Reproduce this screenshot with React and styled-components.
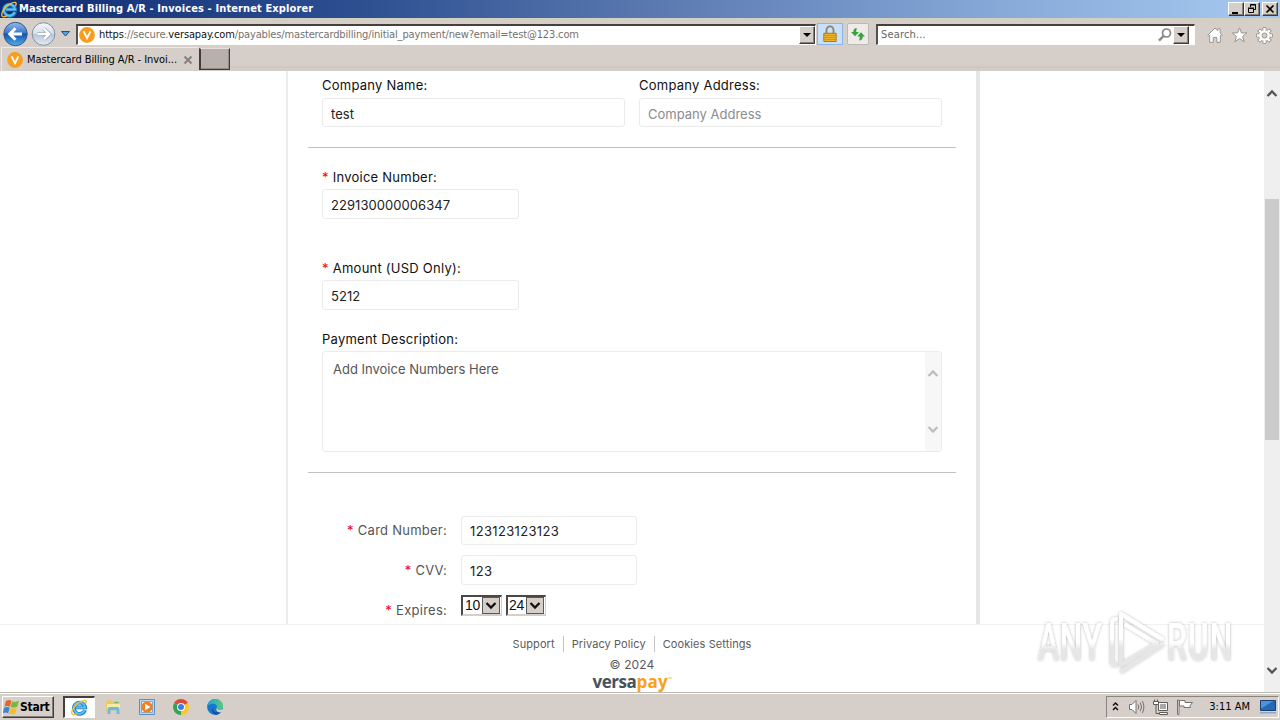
import React from 'react'
import styled, { createGlobalStyle, css } from 'styled-components'

const GlobalStyle = createGlobalStyle`
  * {
    box-sizing: border-box;
  }

  body {
    margin: 0;
    background: #fff;
    overflow: hidden;
  }
`

const colors = {
  chrome: '#d6cec8',
  url: '#75716e',
  label: '#111',
  muted: '#555',
  required: '#f00010',
  orange: '#f9a11b',
}

const systemFont = `'DejaVu Sans Condensed', 'DejaVu Sans', sans-serif`

const Screen = styled.div`
  width: 1280px;
  height: 720px;
  display: flex;
  flex-direction: column;
  overflow: hidden;
  background: #fff;

  svg {
    display: block;
    flex: none;
  }
`

/* window chrome */

const TitleBar = styled.header`
  height: 18px;
  padding: 0 2px 0 1px;
  display: flex;
  align-items: center;
  gap: 1px;
  background: linear-gradient(to right, #102c74, #2d4f90 28%, #5c7bb2 52%, #86a9d8 78%, #a6caf0);
`

const WindowTitle = styled.h1`
  flex: 1;
  margin: 0;
  color: #fff;
  font: bold 11px/18px ${systemFont};
  letter-spacing: 0.12px;
  white-space: nowrap;
`

const WindowButtons = styled.div`
  display: flex;
`

const raised = css`
  border: 1px solid;
  border-color: #fff #403c3a #403c3a #fff;
  box-shadow: inset -1px -1px 0 #857f7a;
`

const WindowButton = styled.button`
  width: 16px;
  height: 14px;
  margin: 0 0 0 ${props => props.$gap || '0'};
  padding: 0;
  background: ${colors.chrome};
  ${raised}
`

const NavBar = styled.nav`
  height: 29px;
  padding: 0 7px 0 3px;
  display: flex;
  align-items: center;
  border-top: 3px solid #d3cfc2;
  background: ${colors.chrome};
`

const HistoryButtons = styled.div`
  width: 73px;
  height: 26px;
  display: flex;
  align-items: center;
`

const Field = styled.div`
  height: 21px;
  display: flex;
  align-items: center;
  border: solid;
  border-width: 2px 1px 1px 2px;
  border-color: #45403e #fff #fff #55504d;
  background: #fff;
`

const AddressField = styled(Field)`
  width: 740px;
  padding-left: 1px;
`

const SearchField = styled(Field)`
  width: 319px;
  margin-left: 7px;
`

const Url = styled.span`
  flex: 1;
  padding-left: ${props => props.$search ? '3px' : '4px'};
  color: ${props => props.$search ? '#666' : colors.url};
  font: 11px/18px ${systemFont};
  letter-spacing: ${props => props.$search ? '0.17px' : '-0.145px'};
  white-space: nowrap;

  b {
    color: #111;
    font-weight: normal;
  }
`

const DropButton = styled.button`
  width: 16px;
  height: 18px;
  margin-right: ${props => props.$right || '0'};
  padding: 0;
  background: ${colors.chrome};
  ${raised}
`

const ToolButton = styled.button`
  width: ${props => props.$active ? '26px' : '22px'};
  height: 22px;
  margin-left: ${props => props.$active ? '1px' : '4px'};
  padding: 0;
  display: flex;
  align-items: center;
  justify-content: center;
  border: 1px solid ${props => props.$active ? '#8fb4e3' : '#bcb8b5'};
  border-radius: ${props => props.$active ? '0' : '2px'};
  background: ${props => props.$active ? '#c9e0fb' : '#eeebe9'};
`

const Tools = styled.div`
  margin-left: auto;
  padding-top: 2px;
  display: flex;
  gap: 8px;
`

const TabBar = styled.div`
  height: 24px;
  padding-left: 1px;
  display: flex;
  align-items: flex-start;
  background: linear-gradient(#d6cec8 19px, #c6c3c0 20px, #d4ccc7 21px);
`

const Tab = styled.div`
  width: 197px;
  height: 24px;
  padding: 1px 5px 0 5px;
  display: flex;
  align-items: center;
  border-left: 1px solid #eeeae7;
  border-top: 1px solid #eeeae7;
  background: ${colors.chrome};
`

const TabTitle = styled.span`
  flex: 1;
  padding-left: 4px;
  color: #000;
  font: 11px/18px ${systemFont};
  letter-spacing: -0.06px;
  white-space: nowrap;
`

const NewTab = styled.div`
  width: 31px;
  height: 22px;
  margin: 1px 0 0 1px;
  border: 1px solid #403c3a;
  border-left-width: 2px;
  border-top-color: #e3dfdc;
  box-shadow: inset -1px -1px 0 #918a86;
  background: #b8b0ab;
`

/* page */

const Viewport = styled.div`
  height: 621px;
  display: flex;
`

const Page = styled.main`
  width: 1264px;
  display: flex;
  flex-direction: column;
  align-items: center;
  font-family: Inter, 'Liberation Sans', sans-serif;
  font-size: 13px;
`

const PanelClip = styled.div`
  width: 1264px;
  height: 553px;
  padding-left: 286px;
  overflow: hidden;
`

const Panel = styled.form`
  width: 694px;
  height: 600px;
  padding: 4px 20px 0;
  border-left: 2px solid #ececec;
  border-right: 4px solid #e6e6e6;
`

const Section = styled.section`
  padding: 0 14px;
`

const Columns = styled.div`
  display: flex;
  gap: 14px;
`

const FormGroup = styled.div`
  margin-top: ${props => props.$top || '0'};
`

const Label = styled.label`
  height: ${props => props.$height || '22px'};
  display: block;
  color: ${colors.label};
  letter-spacing: 0.24px;
  line-height: 21px;
  white-space: nowrap;
`

const Required = styled.span`
  margin-right: 4px;
  color: ${colors.required};
`

const Input = styled.input`
  width: ${props => props.$width};
  height: ${props => props.$height || '30px'};
  padding: ${props => props.$raised ? '0 8px' : '2px 8px 0'};
  display: block;
  border: 1px solid #ebebeb;
  border-radius: 3px;
  outline: none;
  background: #fff;
  color: #222;
  font: inherit;
  letter-spacing: ${props => props.$spacing || '0.06px'};

  &::placeholder {
    color: #8c8c8c;
    opacity: 1;
    letter-spacing: 0;
  }
`

const TextBox = styled.div`
  height: 101px;
  display: flex;
  justify-content: space-between;
  border: 1px solid #ebebeb;
  border-radius: 3px;
  overflow: hidden;
`

const TextBoxText = styled.div`
  padding: 8px 10px;
  color: #555;
  line-height: 18px;
`

const TextBoxScroll = styled.div`
  width: 16px;
  padding: 17px 1px 17px 2px;
  display: flex;
  flex-direction: column;
  justify-content: space-between;
  background: #f7f7f7;
`

const Divider = styled.hr`
  height: 1px;
  margin: 20px 0 0;
  border: 0;
  background: #c2c2c2;
`

const CardForm = styled.section`
  padding-top: 43px;
  display: flex;
  flex-direction: column;
  gap: 10px;
`

const CardRow = styled.div`
  display: grid;
  grid-template-columns: 139px auto;
  column-gap: 14px;
  align-items: start;
`

const CardLabel = styled.label`
  color: ${colors.muted};
  letter-spacing: 0.25px;
  line-height: ${props => props.$line || '29px'};
  text-align: right;
`

const Selects = styled.div`
  display: flex;
  gap: 4px;
`

const SelectBox = styled.div`
  width: 41px;
  height: 21px;
  padding-left: 2px;
  display: flex;
  justify-content: space-between;
  border: solid;
  border-width: 2px 1px 2px 2px;
  border-color: #4b4745 #d6cec8 #d6cec8 #4b4745;
  background: #fff;
  color: #111;
  font: 14px/17px 'Liberation Sans', Arial, sans-serif;
  letter-spacing: -0.4px;

  & + & {
    width: 40px;
    padding-left: 1px;
  }
`

const SelectArrow = styled.span`
  width: 18px;
  height: 17px;
  margin-right: 1px;
  display: flex;
  align-items: center;
  justify-content: center;
  border: 1px solid #5c5855;
  background: ${colors.chrome};
`

const Footer = styled.footer`
  width: 1264px;
  flex: 1;
  padding-top: 11px;
  display: flex;
  flex-direction: column;
  align-items: center;
  border-top: 1px solid #f1f1f1;
  color: #5b5b5b;
`

const FooterLinks = styled.div`
  display: flex;
  font-size: 11px;
  letter-spacing: 0.09px;
  line-height: 16px;
`

const FooterLink = styled.a`
  padding: 0 8px;

  & + & {
    border-left: 1px solid #c4c4c4;
  }
`

const Copyright = styled.div`
  margin-top: 5px;
  font-size: 12px;
  letter-spacing: 0.15px;
  line-height: 15px;
`

const Wordmark = styled.div`
  height: 18px;
  margin-top: 1px;
  display: flex;
  color: #48525b;
  font: bold 17px/17px 'Open Sans', sans-serif;
  letter-spacing: -0.45px;

  span {
    color: ${colors.orange};
    letter-spacing: 0.3px;
  }

  sup {
    margin-top: 4px;
    color: ${colors.orange};
    font-size: 5px;
    line-height: 5px;
  }
`

const ScrollBar = styled.div`
  width: 16px;
  padding: 18px 1px 17px 1px;
  display: flex;
  flex-direction: column;
  align-items: center;
  background: #efefef;
`

const ScrollThumb = styled.div`
  width: 14px;
  height: 241px;
  margin: 101px 0 auto;
  background: #cbcbcb;
`

const Watermark = styled.div`
  position: absolute;
  left: 1030px;
  top: 602px;
`

/* taskbar */

const TaskBar = styled.div`
  height: 28px;
  padding: 3px 1px 2px 2px;
  display: flex;
  align-items: center;
  border-top: 1px solid #bdbab3;
  box-shadow: inset 0 1px 0 #fff;
  background: ${colors.chrome};
`

const StartButton = styled.button`
  width: 52px;
  height: 22px;
  padding: 0;
  display: flex;
  align-items: center;
  background: ${colors.chrome};
  color: #000;
  font: bold 12px/18px ${systemFont};
  letter-spacing: -0.25px;
  ${raised}
`

const ActiveTask = styled.div`
  width: 32px;
  height: 22px;
  margin: 0 10px 0 9px;
  display: flex;
  align-items: center;
  justify-content: center;
  border: solid;
  border-width: 2px 1px 1px 2px;
  border-color: #45403e #fff #fff #45403e;
  background: #fff;
`

const QuickLaunch = styled.div`
  display: flex;
  gap: 18px;
`

const Tray = styled.div`
  width: 173px;
  height: 22px;
  margin-left: auto;
  padding: 0 2px 0 4px;
  display: flex;
  align-items: center;
  border: 1px solid;
  border-color: #8a8480 #fff #fff #8a8480;
`

const TrayIcons = styled.div`
  display: flex;
  align-items: center;
  gap: 8px;
`

const Clock = styled.time`
  margin: 0 10px 0 auto;
  font: 11px/18px ${systemFont};
`

function IeIcon({ size = 17 }) {
  return (
    <svg width={size} height={size} viewBox="0 0 18 18" fill="none">
      <path d="M14.8 11.6A6 6 0 1 1 15 8.8H5.2" stroke="#1f7fc9" strokeWidth="4" />
      <path d="M14.6 11.8A6 6 0 1 1 15 9H5.4" stroke="#63c0f2" strokeWidth="2" />
      <path d="M15.2 5.5C17.7 1.1 14.5.3 9.8 3.1C4.1 6.4-.8 13.2 1.3 16c1 1.3 3.4.5 5-.6" stroke="#f2bd32" strokeWidth="1.5" />
    </svg>
  )
}

function BackIcon() {
  return (
    <svg width="26" height="26" viewBox="0 0 26 26">
      <defs>
        <linearGradient id="back" x2="0" y2="1">
          <stop offset="0" stopColor="#93b9e9" />
          <stop offset=".45" stopColor="#3c79cb" />
          <stop offset=".5" stopColor="#1452ad" />
          <stop offset="1" stopColor="#4fb2ed" />
        </linearGradient>
      </defs>
      <circle cx="12.5" cy="13" r="11.7" fill="url(#back)" stroke="#3c568b" />
      <path d="M19 13H7M12.5 7.2L6.7 13l5.8 5.8" fill="none" stroke="#fff" strokeWidth="3" />
    </svg>
  )
}

function ForwardIcon() {
  return (
    <svg width="28" height="26" viewBox="0 0 28 26">
      <defs>
        <linearGradient id="forward" x2="0" y2="1">
          <stop offset="0" stopColor="#f5f8fc" />
          <stop offset=".48" stopColor="#d5dee9" />
          <stop offset=".52" stopColor="#b9c6d6" />
          <stop offset="1" stopColor="#e4edf7" />
        </linearGradient>
      </defs>
      <circle cx="14.5" cy="13" r="11.3" fill="url(#forward)" stroke="#8490a2" />
      <path d="M8.5 13H20M15 7.8l5.2 5.2-5.2 5.2" fill="none" stroke="#98a5b6" strokeWidth="3.8" />
      <path d="M8.5 13H20M15 7.8l5.2 5.2-5.2 5.2" fill="none" stroke="#fff" strokeWidth="2.4" />
    </svg>
  )
}

function HistoryArrow() {
  return (
    <svg width="19" height="12" viewBox="0 0 19 12">
      <path d="M4.5 3.5h8L8.5 8z" fill="#4fa7dc" stroke="#244d80" />
    </svg>
  )
}

function SiteIcon() {
  return (
    <svg width="16" height="16" viewBox="0 0 16 16">
      <circle cx="8" cy="8" r="7.9" fill="#f99d1c" />
      <path d="M4.6 4.3L8 11.2l3.4-6.900" fill="none" stroke="#fff" strokeWidth="1.9" />
    </svg>
  )
}

function DropArrow() {
  return (
    <svg width="14" height="14" viewBox="0 0 14 14">
      <path d="M3 5h8L7 9z" fill="#000" />
    </svg>
  )
}

function LockIcon() {
  return (
    <svg width="14" height="18" viewBox="0 0 14 18">
      <path d="M3.5 9V4.8a3.5 3.5 0 0 1 7 0V9" fill="none" stroke="#8e8363" strokeWidth="1.8" />
      <path d="M.8 8.3h12.4v8.2H.8z" fill="#eeb329" stroke="#ad7b16" />
      <path d="M1.3 10.5h11.4M1.3 12.5h11.4M1.3 14.5h11.4" stroke="#c98e18" strokeWidth=".8" />
    </svg>
  )
}

function RefreshIcon() {
  return (
    <svg width="16" height="16" viewBox="0 0 16 16" fill="#36a33d">
      <path d="M7 2C4.5 2 3.3 3.5 3.3 6H1l4 4.3L9 6H6.2c0-1.6.2-2.6.8-4z" />
      <path d="M9 14.5c2.5 0 3.7-1.5 3.7-4H15l-4-4.3-3.8 4.3h2.6c0 1.6-.2 2.6-.8 4z" />
    </svg>
  )
}

function SearchIcon() {
  return (
    <svg width="16" height="16" viewBox="0 0 16 16" fill="none" stroke="#8a8785">
      <circle cx="9.5" cy="6" r="4" strokeWidth="1.7" />
      <path d="M6.5 9L2 13.7" strokeWidth="2.4" />
    </svg>
  )
}

function HomeIcon() {
  return (
    <svg width="16" height="16" viewBox="0 0 16 16" fill="#fff" stroke="#99948f" strokeLinejoin="round">
      <path d="M.8 8.2L8 1l2.8 2.6V1.8h2.4V6l2 2.2-1 1-.9-.8v7H9.8v-5H6.2v5H2.7v-7l-.9.8z" />
    </svg>
  )
}

function StarIcon() {
  return (
    <svg width="17" height="16" viewBox="0 0 17 16" fill="#fff" stroke="#99948f">
      <path d="M8.5.9l2 5h5.4l-4.3 3.5 1.6 5.4-4.7-3.2-4.7 3.2 1.6-5.4L1.1 5.9h5.4z" />
    </svg>
  )
}

function GearIcon() {
  const teeth = [0, 45, 90, 135, 180, 225, 270, 315]
  return (
    <svg width="17" height="17" viewBox="0 0 17 17">
      {teeth.map(angle => (
        <path key={angle} d="M7 3V.6h3V3" fill="#fff" stroke="#99948f" transform={`rotate(${angle} 8.5 8.5)`} />
      ))}
      <circle cx="8.5" cy="8.5" r="5.8" fill="#fff" stroke="#99948f" strokeWidth=".8" />
      {teeth.map(angle => (
        <path key={angle} d="M7.5 3.5V1.1h2v2.4" fill="#fff" transform={`rotate(${angle} 8.5 8.5)`} />
      ))}
      <circle cx="8.5" cy="8.5" r="2.5" fill="#d6cec8" stroke="#99948f" />
    </svg>
  )
}

function Chevron({ up, color, width = 12 }) {
  return (
    <svg width={width} height="9" viewBox="0 0 12 9">
      <path d={up ? 'M1.5 7L6 2.5 10.5 7' : 'M1.5 2L6 6.5 10.5 2'} fill="none" stroke={color} strokeWidth="2.3" />
    </svg>
  )
}

function WindowsFlag() {
  return (
    <svg width="17" height="17" viewBox="0 0 17 17">
      <path d="M2.8 2.2c2.2-1.6 4.2-1.3 5.6-.3L7 7.7c-1.7-.9-3.6-.9-5.5.1z" fill="#e8642f" />
      <path d="M9 2.2c2 1 4.4 1 7-.4l-1.8 6c-2.2 1-4.3 1-6.4.1z" fill="#77b843" />
      <path d="M1.2 8.7c2-1 3.9-1 5.5-.1l-1.5 5.6c-1.9-1-3.6-1-5.5 0z" fill="#3e83cd" />
      <path d="M7.6 8.9c2.1.9 4 .9 6.3-.1l-1.6 5.7c-2.2 1-4.3 1-6.2.1z" fill="#f4bd2c" />
    </svg>
  )
}

function FolderIcon() {
  return (
    <svg width="16" height="16" viewBox="0 0 16 16">
      <path d="M1 2l5-1 1.5 1.5H14V12H1z" fill="#e9ca66" />
      <path d="M2 5h13v7H2z" fill="#f8e9a6" />
      <path d="M2.5 15V10c0-1.5 1-2 2.5-2h7c1.5 0 2.5.5 2.5 2v5h-3v-3.5h-6V15z" fill="#75b7d9" />
      <path d="M9.5 3.5h4" stroke="#57b87c" strokeWidth="1.2" />
    </svg>
  )
}

function MediaIcon() {
  return (
    <svg width="16" height="16" viewBox="0 0 16 16">
      <path d="M.5.5h15v15H.5z" fill="#b9d8f3" stroke="#5a8fc2" />
      <path d="M2.5 2.5h11v11h-11z" fill="#e9f3fb" stroke="#7eaad2" />
      <circle cx="8" cy="8" r="5.6" fill="#f08020" />
      <path d="M6.2 4.8L11.4 8l-5.2 3.2z" fill="#fff" />
    </svg>
  )
}

function ChromeIcon() {
  return (
    <svg width="16" height="16" viewBox="0 0 16 16">
      <path d="M8 8L1.1 4A8 8 0 0 1 14.9 4z" fill="#df4937" />
      <path d="M8 8l6.9-4A8 8 0 0 1 8 16z" fill="#f9c72f" />
      <path d="M8 8v8A8 8 0 0 1 1.1 4z" fill="#36a353" />
      <path d="M8 4h6.9L11.5 10 8 16A8 8 0 0 0 14.9 4z" fill="#f9c72f" />
      <circle cx="8" cy="8" r="4" fill="#fff" />
      <circle cx="8" cy="8" r="3" fill="#3d7de0" />
    </svg>
  )
}

function EdgeIcon() {
  return (
    <svg width="16" height="16" viewBox="0 0 16 16">
      <defs>
        <linearGradient id="edge" x2="1">
          <stop offset="0" stopColor="#259de0" />
          <stop offset="1" stopColor="#55cf74" />
        </linearGradient>
      </defs>
      <circle cx="8" cy="8" r="7.9" fill="#1677cb" />
      <path d="M.2 7.5C.9 3 4 .1 8 .1c4.7 0 8 3.2 8 6.5 0 2.4-1.6 4-4 4-1.8 0-2.900-.8-2.3-1.800C11 6.500 8.500 4.700 6 4.700c-2.400 0-4.700 1-5.800 2.800z" fill="url(#edge)" />
      <path d="M6 8.5c-.8 3.2 2.5 6 6.5 4.6 1-.4 1.800-.5 1.700.2A8 8 0 0 1 10 15.7C6 15.5 3.5 11.5 6 8.500z" fill="#1a4f9d" />
      <path d="M9.6 9c.4 1.500 2.900 2.300 5.700.9l.7 2-1.500 1.300c-3 .8-6.200-.9-4.900-4.200z" fill="#d6cec8" />
    </svg>
  )
}

function TrayExpand() {
  return (
    <svg width="9" height="12" viewBox="0 0 9 12" fill="none" stroke="#111" strokeWidth="1.5">
      <path d="M2 4.500L4.500 2 7 4.500M2 9l2.500-2.500L7 9" />
    </svg>
  )
}

function SpeakerIcon() {
  return (
    <svg width="17" height="16" viewBox="0 0 17 16" fill="none" stroke="#77726e">
      <path d="M1.500 5.500h2.500l4-4v13l-4-4H1.500z" fill="#fff" />
      <path d="M10 5.500q1.500 2.500 0 5M12.300 3.800q2.500 4.200 0 8.400M14.300 2q3.200 6 0 12" />
    </svg>
  )
}

function NetworkIcon() {
  return (
    <svg width="16" height="16" viewBox="0 0 16 16" stroke="#5f5b58">
      <path d="M5.5 3.5h9v8h-9z" fill="#fff" />
      <path d="M7 5h6v5H7z" fill="#aaa6a3" stroke="none" />
      <path d="M6.5 13.5h8v2h-8z" fill="#fff" />
      <path d="M.5 2.5h5v3h-5z" fill="#fff" />
      <path d="M1.5.5v2m3-2v2M3 6v8.5h3" fill="none" />
    </svg>
  )
}

function FlagIcon() {
  return (
    <svg width="17" height="16" viewBox="0 0 17 16" fill="#fff" stroke="#77726e">
      <path d="M.5 1v14.5H2V1z" />
      <path d="M2.5 1.5H8v2h7.5l-2.500 3 .5 2H7V7H2.500z" />
    </svg>
  )
}

function DesktopIcon() {
  return (
    <svg width="16" height="14" viewBox="0 0 16 14">
      <path d="M.5.5h15v10H.5z" fill="#2468b8" stroke="#1d3e70" />
      <path d="M1 1h12L2 8H1z" fill="#4d93d9" />
      <path d="M0 12h16v1.5H0z" fill="#8ea9c7" />
    </svg>
  )
}

function AnyRunMark() {
  return (
    <svg width="212" height="76" viewBox="0 0 212 76">
      <defs>
        <linearGradient id="fade" gradientUnits="userSpaceOnUse" x1="0" y1="0" x2="0" y2="76">
          <stop offset=".48" stopColor="#fff" />
          <stop offset=".58" stopColor="#e6e6e6" />
        </linearGradient>
        <linearGradient id="textFade" x2="0" y2="1">
          <stop offset=".5" stopColor="#fff" />
          <stop offset=".62" stopColor="#e6e6e6" />
        </linearGradient>
        <filter id="halo" x="-20%" y="-20%" width="140%" height="140%">
          <feDropShadow dx="0" dy="0" stdDeviation="1.7" floodColor="#000" floodOpacity=".3" />
        </filter>
      </defs>
      <g filter="url(#halo)" fontFamily="Roboto, sans-serif" fontSize="51" fontWeight="500" fill="url(#textFade)">
        <text transform="translate(8 58) scale(.62 1)" textLength="103" lengthAdjust="spacing">ANY</text>
        <text transform="translate(137 58) scale(.62 1)" textLength="105" lengthAdjust="spacing">RUN</text>
      </g>
      <g filter="url(#halo)" fill="none" stroke="url(#fade)" strokeWidth="4" strokeLinejoin="round" strokeLinecap="round">
        <path d="M86 17q-4 0-4 4v39q0 3 4 3M91 60V12l41 25M96 23l31 19-36 21M132 43L92 69" />
      </g>
    </svg>
  )
}

function BrowserChrome() {
  return (
    <>
      <TitleBar>
        <IeIcon />
        <WindowTitle>Mastercard Billing A/R - Invoices - Internet Explorer</WindowTitle>
        <WindowButtons>
          <WindowButton aria-label="Minimize">
            <svg width="14" height="12"><path d="M3 9h6v2H3z" /></svg>
          </WindowButton>
          <WindowButton aria-label="Restore">
            <svg width="14" height="12" fill="none" stroke="#000">
              <path d="M5.5 4V1.5h5v5H9M5 2h6M3.5 5.5h5v4h-5zM3 5h6" />
            </svg>
          </WindowButton>
          <WindowButton aria-label="Close" $gap="2px">
            <svg width="14" height="12"><path d="M3.5 2.5l7 7m0-7l-7 7" stroke="#000" strokeWidth="1.7" /></svg>
          </WindowButton>
        </WindowButtons>
      </TitleBar>
      <NavBar>
        <HistoryButtons>
          <BackIcon />
          <ForwardIcon />
          <HistoryArrow />
        </HistoryButtons>
        <AddressField>
          <SiteIcon />
          <Url>
            <b>https</b>://secure.<b>versapay.com</b>/payables/mastercardbilling/initial_payment/new?email=test@123.com
          </Url>
          <DropButton aria-label="History"><DropArrow /></DropButton>
        </AddressField>
        <ToolButton $active aria-label="Security"><LockIcon /></ToolButton>
        <ToolButton aria-label="Refresh"><RefreshIcon /></ToolButton>
        <SearchField>
          <Url $search>Search...</Url>
          <SearchIcon />
          <DropButton $right="5px" aria-label="Providers"><DropArrow /></DropButton>
        </SearchField>
        <Tools>
          <HomeIcon />
          <StarIcon />
          <GearIcon />
        </Tools>
      </NavBar>
      <TabBar>
        <Tab>
          <SiteIcon />
          <TabTitle>Mastercard Billing A/R - Invoi...</TabTitle>
          <svg width="10" height="10" viewBox="0 0 10 10">
            <path d="M1.5 1.5l7 7m0-7l-7 7" stroke="#87817d" strokeWidth="2" />
          </svg>
        </Tab>
        <NewTab />
      </TabBar>
    </>
  )
}

function PaymentForm() {
  return (
    <Panel>
      <Section>
        <Columns>
          <FormGroup>
            <Label $height="23px">Company Name:</Label>
            <Input $width="303px" $height="29px" defaultValue="test" />
          </FormGroup>
          <FormGroup>
            <Label $height="23px">Company Address:</Label>
            <Input $width="303px" $height="29px" placeholder="Company Address" />
          </FormGroup>
        </Columns>
      </Section>
      <Divider />
      <Section>
        <FormGroup $top="19px">
          <Label><Required>*</Required>Invoice Number:</Label>
          <Input $width="197px" defaultValue="229130000006347" />
        </FormGroup>
        <FormGroup $top="39px">
          <Label><Required>*</Required>Amount (USD Only):</Label>
          <Input $width="197px" defaultValue="5212" />
        </FormGroup>
        <FormGroup $top="19px">
          <Label>Payment Description:</Label>
          <TextBox>
            <TextBoxText>Add Invoice Numbers Here</TextBoxText>
            <TextBoxScroll>
              <Chevron up color="#bdbdbd" />
              <Chevron color="#bdbdbd" />
            </TextBoxScroll>
          </TextBox>
        </FormGroup>
      </Section>
      <Divider />
      <CardForm>
        <CardRow>
          <CardLabel><Required>*</Required>Card Number:</CardLabel>
          <Input $width="176px" $height="29px" $spacing="0.34px" $raised defaultValue="123123123123" />
        </CardRow>
        <CardRow>
          <CardLabel $line="30px"><Required>*</Required>CVV:</CardLabel>
          <Input $width="176px" $spacing="0.34px" defaultValue="123" />
        </CardRow>
        <CardRow>
          <CardLabel $line="30px"><Required>*</Required>Expires:</CardLabel>
          <Selects>
            <SelectBox>10<SelectArrow><Chevron color="#111" /></SelectArrow></SelectBox>
            <SelectBox>24<SelectArrow><Chevron color="#111" /></SelectArrow></SelectBox>
          </Selects>
        </CardRow>
      </CardForm>
    </Panel>
  )
}

function Taskbar() {
  return (
    <TaskBar>
      <StartButton><WindowsFlag />Start</StartButton>
      <ActiveTask><IeIcon size={17} /></ActiveTask>
      <QuickLaunch>
        <FolderIcon />
        <MediaIcon />
        <ChromeIcon />
        <EdgeIcon />
      </QuickLaunch>
      <Tray>
        <TrayIcons>
          <TrayExpand />
          <SpeakerIcon />
          <NetworkIcon />
          <FlagIcon />
        </TrayIcons>
        <Clock>3:11 AM</Clock>
        <DesktopIcon />
      </Tray>
    </TaskBar>
  )
}

function App() {
  return (
    <Screen>
      <GlobalStyle />
      <BrowserChrome />
      <Viewport>
        <Page>
          <PanelClip>
            <PaymentForm />
          </PanelClip>
          <Footer>
            <FooterLinks>
              <FooterLink>Support</FooterLink>
              <FooterLink>Privacy Policy</FooterLink>
              <FooterLink>Cookies Settings</FooterLink>
            </FooterLinks>
            <Copyright>© 2024</Copyright>
            <Wordmark>versa<span>pay</span><sup>™</sup></Wordmark>
          </Footer>
        </Page>
        <ScrollBar>
          <Chevron up color="#555" />
          <ScrollThumb />
          <Chevron color="#555" />
        </ScrollBar>
      </Viewport>
      <Taskbar />
      <Watermark><AnyRunMark /></Watermark>
    </Screen>
  )
}

export default App
